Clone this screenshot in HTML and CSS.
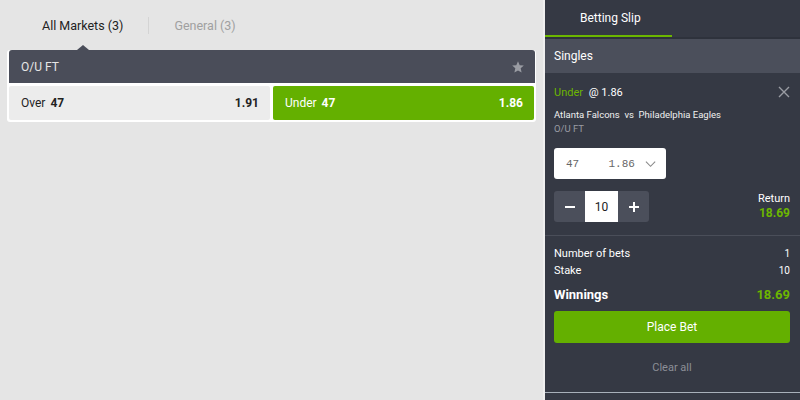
FILE: index.html
```html
<!DOCTYPE html>
<html>
<head lang="en">
    <meta charset="UTF-8">
    <title>Betting</title>
    <link rel="stylesheet" href="styles.css">
</head>
<body>
    <div class="main">
        <ul class="tabs">
            <li class="active">All Markets (3)</li>
            <li>General (3)</li>
        </ul>

        <div class="market">
            <div class="market-head">
                <span>O/U FT</span>
                <svg width="14" height="14" viewBox="0 0 24 24"><path d="M12 2l2.9 6.9 7.1.6-5.4 4.7 1.6 7.3L12 17.8 5.8 21.5l1.6-7.3L2 9.5l7.1-.6z" fill="#9a9ca3"/></svg>
            </div>
            <div class="market-body">
                <div class="odd">
                    <span>Over <b>47</b></span>
                    <b>1.91</b>
                </div>
                <div class="odd selected">
                    <span>Under <b>47</b></span>
                    <b>1.86</b>
                </div>
            </div>
        </div>
    </div>

    <div class="slip">
        <div class="slip-tabs">
            <div class="slip-tab">Betting Slip</div>
        </div>
        <div class="slip-title">Singles</div>

        <div class="bet">
            <div class="bet-top">
                <span><span class="green pick">Under</span> @ 1.86</span>
                <svg width="12" height="12" viewBox="0 0 12 12"><path d="M1 1l10 10M11 1L1 11" stroke="#9a9ca3" stroke-width="1.4"/></svg>
            </div>
            <div class="bet-match">Atlanta Falcons &nbsp;vs&nbsp; Philadelphia Eagles</div>
            <div class="bet-market">O/U FT</div>

            <div class="select">
                <span>47</span>
                <span>1.86</span>
                <svg width="12" height="8" viewBox="0 0 12 8"><path d="M1 1.5l5 5 5-5" stroke="#8a8a8a" stroke-width="1.2" fill="none"/></svg>
            </div>

            <div class="stake-row">
                <div class="stepper">
                    <div class="step">
                        <svg width="12" height="12" viewBox="0 0 12 12"><path d="M1 6h10" stroke="#fff" stroke-width="2"/></svg>
                    </div>
                    <div class="stake">10</div>
                    <div class="step">
                        <svg width="12" height="12" viewBox="0 0 12 12"><path d="M1 6h10M6 1v10" stroke="#fff" stroke-width="2"/></svg>
                    </div>
                </div>
                <div class="return">
                    <div>Return</div>
                    <div class="green">18.69</div>
                </div>
            </div>
        </div>

        <div class="summary">
            <div class="line"><span>Number of bets</span><span>1</span></div>
            <div class="line"><span>Stake</span><span>10</span></div>
            <div class="line big"><span>Winnings</span><span class="green">18.69</span></div>
            <div class="place">Place Bet</div>
            <div class="clear">Clear all</div>
        </div>
    </div>
</body>
</html>
```

FILE: styles.css
```css
body{
    margin: 0;
    height: 400px;
    overflow: hidden;
    display: flex;
    background-color: #e5e5e5;
    font-family: Roboto, "Noto Sans", sans-serif;
}

.main{
    width: 543px;
}

.tabs{
    list-style: none;
    margin: 0;
    padding: 0 0 0 17px;
    height: 50px;
    display: flex;
    align-items: center;
}

.tabs li{
    position: relative;
    padding: 0 25px;
    font-size: 12.5px;
    color: #a0a0a0;
    line-height: 17px;
}

.tabs li + li{
    border-left: 1px solid #d4d4d4;
}

.tabs li.active{
    color: #222;
}

.tabs li.active::after{
    content: "";
    position: absolute;
    left: 50%;
    bottom: -16px;
    margin-left: -6px;
    border: 6px solid transparent;
    border-top: 0;
    border-bottom: 5px solid #4a4d59;
}

.market{
    margin: 0 7px 0 7px;
    background-color: #fff;
    border-radius: 3px;
}

.market-head{
    margin: 0 1px 0 2px;
    height: 33px;
    background-color: #4a4d59;
    border-radius: 3px 3px 0 0;
    display: flex;
    align-items: center;
    justify-content: space-between;
    padding: 0 10px 0 12px;
    font-size: 12px;
    color: #e6e6e6;
}

.market-body{
    padding: 3px 2px 2px 2px;
    display: grid;
    grid-template-columns: 1fr 1fr;
    gap: 3px;
}

.odd{
    height: 34px;
    display: flex;
    align-items: center;
    justify-content: space-between;
    padding: 0 11px 0 12px;
    background-color: #ececec;
    font-size: 12px;
    color: #222;
    border-radius: 2px;
}

.odd b{
    font-weight: 700;
    margin-left: 2px;
}

.odd.selected{
    background-color: #64b000;
    color: #fff;
}

.slip{
    width: 255px;
    border-left: 2px solid #efefef;
    background-color: #353944;
    color: #fff;
    font-size: 11px;
}

.slip-tabs{
    height: 37px;
    border-bottom: 2px solid #2e323c;
}

.slip-tab{
    width: 127px;
    height: 37px;
    line-height: 37px;
    padding-left: 35px;
    box-sizing: border-box;
    border-bottom: 2px solid #6cb600;
    font-size: 12px;
}

.slip-title{
    height: 34px;
    line-height: 34px;
    padding: 0 9px;
    background-color: #4b4f5b;
    font-size: 12px;
}

.bet{
    padding: 12px 10px 13px 9px;
    border-bottom: 1px solid #4a4e59;
}

.bet-top{
    display: flex;
    justify-content: space-between;
    align-items: center;
    font-size: 11px;
    height: 14px;
}

.green{
    color: #6cb600;
}

.pick{
    margin-right: 3px;
}

.bet-match{
    margin-top: 10px;
    font-size: 9.5px;
    color: #f0f0f0;
}

.bet-market{
    margin-top: 3px;
    font-size: 9.5px;
    color: #9a9ca3;
}

.select{
    margin-top: 14px;
    width: 112px;
    height: 31px;
    box-sizing: border-box;
    background-color: #fff;
    border-radius: 3px;
    display: flex;
    align-items: center;
    padding: 0 10px 0 12px;
    font-family: "Liberation Mono", monospace;
    font-size: 11px;
    color: #666;
}

.select span:first-child{
    width: 46px;
}

.select svg{
    margin-left: 10px;
}

.stake-row{
    margin-top: 12px;
    display: flex;
    justify-content: space-between;
    align-items: flex-end;
}

.stepper{
    display: flex;
    height: 31px;
    border-radius: 3px;
    overflow: hidden;
    background-color: #4b4f5b;
}

.step{
    width: 31px;
    display: flex;
    align-items: center;
    justify-content: center;
}

.stake{
    width: 33px;
    background-color: #fff;
    color: #222;
    font-size: 12px;
    display: flex;
    align-items: center;
    justify-content: center;
}

.return{
    text-align: right;
    font-size: 11px;
    line-height: 14px;
    padding-bottom: 2px;
}

.return .green{
    font-weight: 700;
    font-size: 12px;
}

.summary{
    padding: 9px 10px 0 9px;
    height: 147px;
    border-bottom: 1px solid #a8b0ba;
}

.line{
    display: flex;
    justify-content: space-between;
    align-items: center;
    height: 17px;
    font-size: 11px;
}

.line span:last-child{
    font-size: 10px;
}

.line.big{
    height: 30px;
    font-size: 13px;
    font-weight: 700;
}

.line.big span:last-child{
    font-size: 13px;
}

.place{
    margin-top: 2px;
    height: 32px;
    line-height: 32px;
    border-radius: 3px;
    background-color: #64b000;
    text-align: center;
    font-size: 12px;
}

.clear{
    margin-top: 18px;
    text-align: center;
    color: #8c8f97;
    font-size: 11px;
}
```
